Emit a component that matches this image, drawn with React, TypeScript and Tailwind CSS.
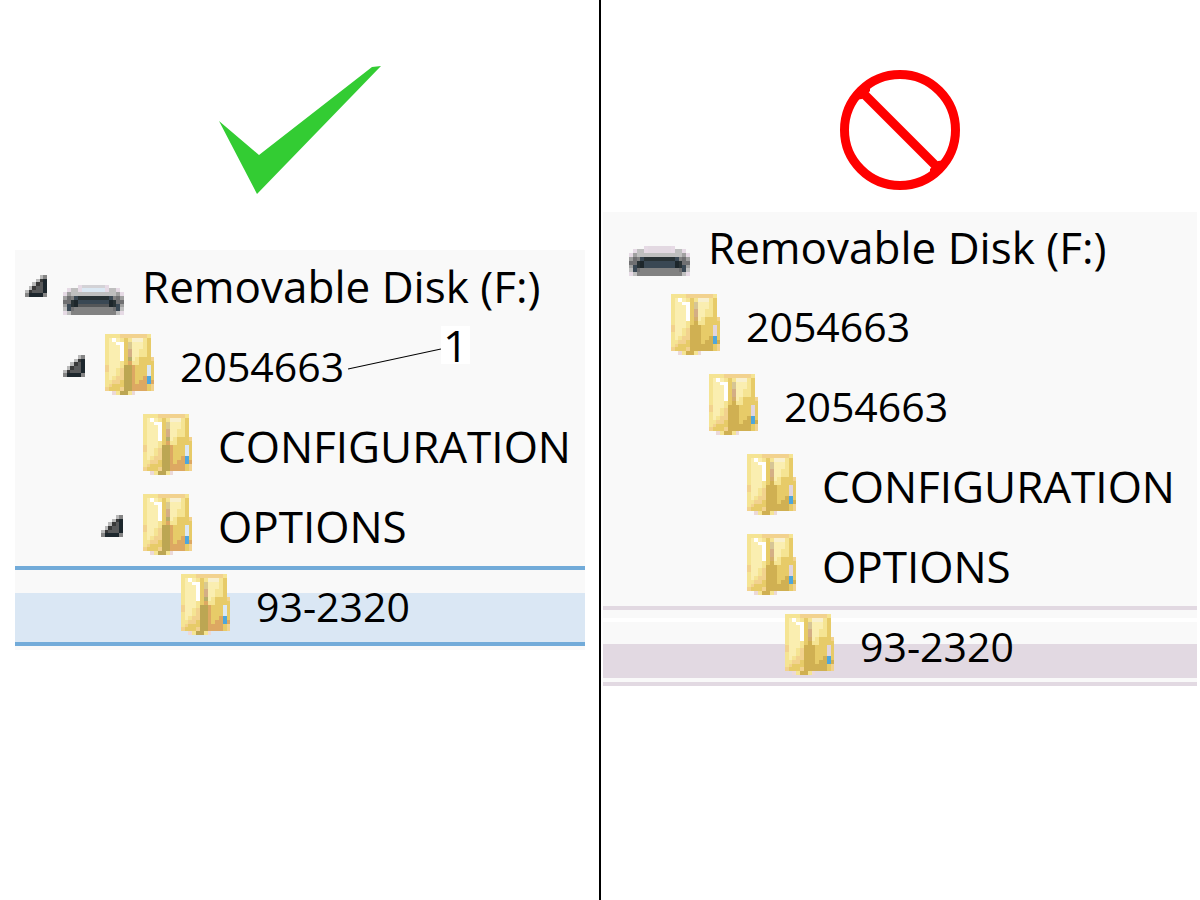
type Palette = Record<string, string>;

const folderRows = [
  "ppppooooooop.",
  "pywypgpcccpg.",
  "pyywwgtyyypg.",
  "pyyywgtyyypg.",
  "pyyywgmyyppg.",
  "pyyywgmyyppg.",
  "pyyywgvypggso",
  "pyyypgnppgggg",
  "oyyypbbngggle",
  "oyypobbngggle",
  "pyypobbngggle",
  "pypoobbnggnBg",
  "ppoogbbngnnBn",
  "pogggbbnnnngo",
  "ogggobbnnnngo",
  "..kpbbpk.....",
];

const goodFolder: Palette = {
  p: "#f5e493", o: "#f2d28e", y: "#faeeb0", w: "#ffffff", g: "#e7cb68",
  c: "#f8f0cf", t: "#d9c990", m: "#d4ae85", v: "#b5ad6c", n: "#dda862",
  b: "#bca653", l: "#dbe8f3", B: "#4ea6dc", e: "#e7cb68", s: "#e7cb68",
  k: "#ecd9d8",
};

const badFolder: Palette = {
  ...goodFolder, n: "#d0b052", b: "#d0b052", v: "#d4ae6c", l: "#e0d5de",
  t: "#d6c595",
};

const driveRows = [
  "....edddddde....",
  ".eccellllllecce.",
  "eaccccccccccccae",
  "agxhrrrrrrrrhxga",
  "ggrkhhhhhhhhkrgg",
  "ahrkmmmmmmmmkrha",
  "chgxxxxxxxxxxghc",
  "ecxxxxxxxxxxxxce",
];

const goodDrive: Palette = {
  e: "#e6dae5", d: "#d3d2d6", c: "#bfbfbf", l: "#dbe8f3", a: "#a0a0a0",
  g: "#707072", x: "#828282", h: "#3a4854", r: "#293235", k: "#1d262b",
  m: "#555759",
};

const badDrive: Palette = { ...goodDrive, l: "#e3d9e2", d: "#e3d9e2", m: "#3a4854" };

const arrowRows = ["....ab", "...adK", "..adiK", ".adiiK", "adiiiK", "bKKKKb"];
const arrowColors: Palette = {
  a: "#b9b9b9", b: "#858585", d: "#393939", i: "#58595a", K: "#1d272d",
};

function Pixels({ rows, colors, x = 0, y = 0 }: { rows: string[]; colors: Palette; x?: number; y?: number }) {
  return (
    <>
      {rows.flatMap((row, j) =>
        [...row].map((c, i) =>
          colors[c] ? <rect key={`${i}-${j}`} x={x + i} y={y + j} width="1" height="1" fill={colors[c]} /> : null,
        ),
      )}
    </>
  );
}

function Icon({ kind, good }: { kind: "drive" | "folder"; good: boolean }) {
  return (
    <svg viewBox="0 0 16 16" className="mb-1 size-[61px] shrink-0" shapeRendering="crispEdges" aria-hidden="true">
      {kind === "drive" ? (
        <Pixels rows={driveRows} colors={good ? goodDrive : badDrive} y={8} />
      ) : (
        <Pixels rows={folderRows} colors={good ? goodFolder : badFolder} x={1} />
      )}
    </svg>
  );
}

function Arrow({ label }: { label: string }) {
  return (
    <button type="button" aria-label={`Collapse ${label}`} className="mr-4 shrink-0">
      <svg viewBox="0 0 6 6" className="size-[22px]" shapeRendering="crispEdges" aria-hidden="true">
        <Pixels rows={arrowRows} colors={arrowColors} />
      </svg>
    </button>
  );
}

type Item = {
  label: string;
  indent: string;
  kind?: "drive";
  arrow?: boolean;
  height?: string;
  callout?: boolean;
};

function Callout() {
  return (
    <div className="absolute top-0 left-[333px] flex">
      <svg viewBox="0 0 93 44" className="h-11 w-[93px]" aria-hidden="true">
        <path d="M0 43 L93 23" stroke="#000" strokeWidth="1.2" />
      </svg>
      <span className="flex h-[38px] w-[29px] items-center justify-center bg-white text-[44px]">1</span>
    </div>
  );
}

function Row({ item, good }: { item: Item; good: boolean }) {
  const numeric = /^\d/.test(item.label);
  return (
    <li className={`relative flex items-center ${item.height ?? "h-20"} ${item.indent}`}>
      {item.arrow && <Arrow label={item.label} />}
      <Icon kind={item.kind ?? "folder"} good={good} />
      <span className={`ml-[18px] whitespace-nowrap ${numeric ? "text-[41px]" : "text-[44px]"}`}>{item.label}</span>
      {item.callout && <Callout />}
    </li>
  );
}

const goodItems: Item[] = [
  { label: "Removable Disk (F:)", indent: "pl-[10px]", kind: "drive", arrow: true, height: "h-[76px] pb-1" },
  { label: "2054663", indent: "pl-[48px]", arrow: true, callout: true },
  { label: "CONFIGURATION", indent: "pl-[124px]" },
  { label: "OPTIONS", indent: "pl-[86px]", arrow: true },
  {
    label: "93-2320",
    indent: "pl-[162px]",
    height: "h-20 border-y-4 border-[#72abd9] bg-[linear-gradient(to_bottom,#f9f9f9_23px,#dae7f4_23px)]",
  },
];

const badItems: Item[] = [
  { label: "Removable Disk (F:)", indent: "pl-[26px]", kind: "drive", height: "h-[74px] pb-1" },
  { label: "2054663", indent: "pl-[64px]" },
  { label: "2054663", indent: "pl-[102px]" },
  { label: "CONFIGURATION", indent: "pl-[140px]" },
  { label: "OPTIONS", indent: "pl-[140px]" },
  {
    label: "93-2320",
    indent: "pl-[178px]",
    height:
      "h-20 border-y-4 border-[#e2d9e2] bg-[linear-gradient(to_bottom,#f9f9f9_8px,#fff_8px,#fff_12px,#f9f9f9_12px,#f9f9f9_34px,#e2d9e2_34px,#e2d9e2_68px,#f9f9f9_68px)]",
  },
];

function Tree({ items, good }: { items: Item[]; good: boolean }) {
  return (
    <ul className={`bg-[#f9f9f9] ${good ? "pb-1" : ""}`}>
      {items.map((item, i) => (
        <Row key={i} item={item} good={good} />
      ))}
    </ul>
  );
}

export default function App() {
  return (
    <main className="grid min-h-screen grid-cols-[1fr_2px_1fr] bg-white font-['Open_Sans',sans-serif] leading-none text-black">
      <section className="min-w-0 pr-[14px] pl-[15px]" aria-label="Correct folder structure">
        <div className="flex h-[250px] justify-center pt-[65px]">
          <svg viewBox="0 0 164 130" className="h-[130px] w-[164px]" aria-hidden="true">
            <path d="M1 56 L41 90 L154 2 L163 1 L39 129 Z" fill="#33cc33" />
          </svg>
        </div>
        <Tree items={goodItems} good />
      </section>
      <div className="bg-black" />
      <section className="min-w-0 pr-[3px] pl-[2px]" aria-label="Incorrect folder structure">
        <div className="flex h-[212px] justify-center pt-[70px]">
          <svg viewBox="0 0 120 120" className="size-[120px]" aria-hidden="true">
            <circle cx="60" cy="60" r="55.5" fill="none" stroke="#f00" strokeWidth="9" />
            <path d="M20 20 L100 100" stroke="#f00" strokeWidth="9" />
            <path d="M14 30 L22 29 L30 21 L30 14 Z M106 90 L98 91 L90 99 L90 106 Z" fill="#f00" />
          </svg>
        </div>
        <Tree items={badItems} good={false} />
      </section>
    </main>
  );
}
